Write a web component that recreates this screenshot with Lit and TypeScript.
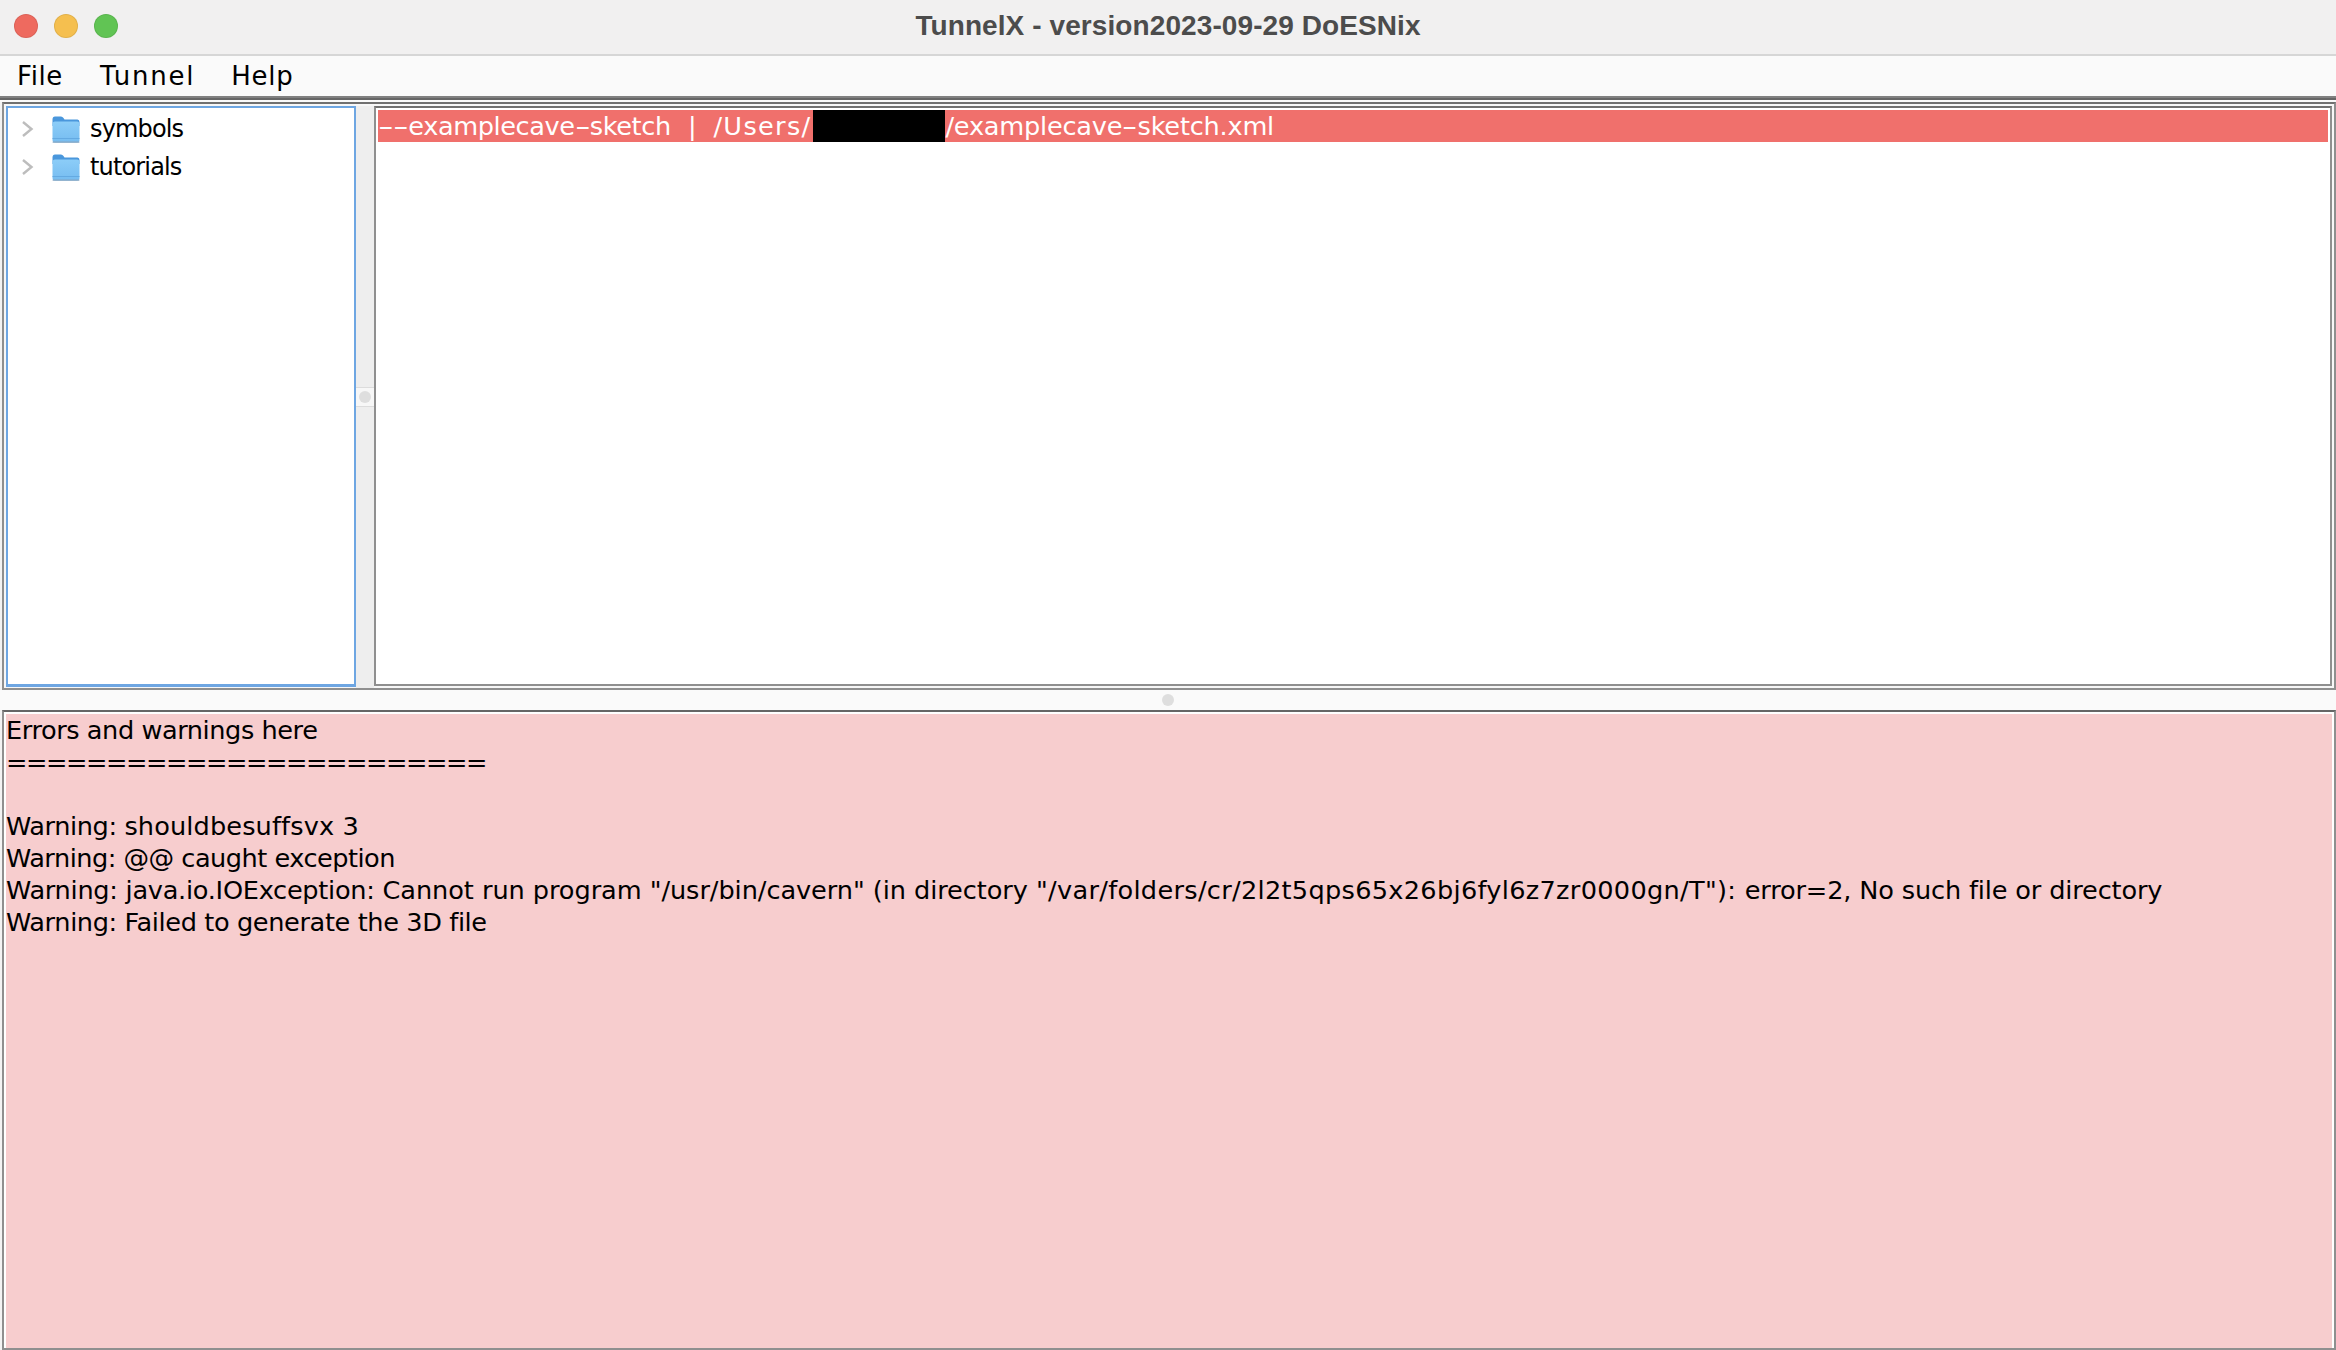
import { LitElement, html, css, svg } from "lit";
import { customElement } from "lit/decorators.js";

const folder = svg`<svg class="folder" viewBox="0 0 28 27" width="28" height="27">
  <defs><linearGradient id="fg" x1="0" y1="0" x2="0" y2="1"><stop offset="0" stop-color="#8ccdf8"/><stop offset="1" stop-color="#76bcf0"/></linearGradient></defs>
  <path d="M0.5 3.5 Q0.5 0.5 3 0.5 H9 Q10.5 0.5 11.5 2 L12.5 3.5 H25.5 Q27.5 3.5 27.5 6 V10 H0.5 Z" fill="#4a97dc"/>
  <rect x="0.5" y="5.5" width="27" height="21" rx="2.5" fill="url(#fg)"/>
  <rect x="0.5" y="22" width="27" height="1" fill="#64aae2"/>
  <rect x="0.5" y="25.5" width="27" height="1.2" rx=".6" fill="#86a6c2"/>
</svg>`;
const chevron = svg`<svg class="chev" viewBox="0 0 12 16" width="12" height="16"><path d="M1 1 L9.5 8 L1 15" fill="none" stroke="#bdbdbd" stroke-width="2.4"/></svg>`;

@customElement("app-root")
export class AppRoot extends LitElement {
  static styles = css`
    :host { display: flex; flex-direction: column; width: 2336px; height: 1350px; overflow: hidden; background: #f3f3f3;
      font-family: "DejaVu Sans", sans-serif; color: #000; }
    .titlebar { height: 54px; flex: none; display: flex; align-items: center; justify-content: center; background: #f1f0f0;
      border-bottom: 2px solid #d6d6d6; position: relative; }
    .lights { position: absolute; left: 14px; top: 14px; display: flex; gap: 16px; }
    .light { width: 24px; height: 24px; border-radius: 50%; box-sizing: border-box; border: 1px solid rgba(0,0,0,.08); }
    .red { background: #ee6a5f; }
    .yellow { background: #f5bf4f; }
    .green { background: #61c454; }
    .title { font: bold 28px "Liberation Sans", sans-serif; color: #4c4c4c; margin-top: -2px; letter-spacing: .09px; }
    .menu { height: 40px; flex: none; display: flex; background: #fafafa; padding-left: 17px; gap: 38px; align-items: center;
      font-size: 26px; }
    .m-file { letter-spacing: .6px; margin-right: -1px; }
    .m-tunnel { letter-spacing: 1.8px; margin-right: -2px; }
    .m-help { letter-spacing: .7px; }
    .rule { flex: none; height: 4px; background: linear-gradient(#808080 0 50%, #666 50%); }
    .gap { flex: none; height: 2px; background: #fafafa; }
    .upper { flex: none; height: 588px; box-sizing: border-box; margin-left: 2px; border: 2px solid #8f8f8f; border-top-color: #707070;
      background: #f7f7f7; display: flex; padding: 2px 2px 0 2px; }
    .tree { width: 350px; height: 581px; box-sizing: border-box; flex: none; background: #fff; border: 2px solid #6ea6e2; border-bottom-width: 3px; padding-top: 2px; }
    .row { height: 38px; display: flex; align-items: center; font-size: 24px; letter-spacing: -.85px; }
    .chev { margin-left: 14px; flex: none; margin-top: -1px; }
    .folder { margin-left: 18px; flex: none; }
    .row span { margin-left: 10px; }
    .vsplit { width: 18px; flex: none; display: flex; align-items: center; background: #eee; }
    .vgrip { width: 18px; height: 20px; background: #f7f7f7; border: solid #dcdcdc; border-width: 1px 0; box-sizing: border-box; display: flex; align-items: center; justify-content: center; }
    .dot { width: 12px; height: 12px; border-radius: 50%; background: #dedede; flex: none; }
    .list { flex: 1; height: 580px; box-sizing: border-box; border: 2px solid #707070; border-color: #707070 #8f8f8f #8f8f8f #8f8f8f; background: #fff; padding: 2px; min-width: 0; }
    .sel { height: 32px; background: #f0706c; color: #fff; font-size: 25.6px; line-height: 32px; white-space: pre; display: flex; word-spacing: 9.5px; }
    .hy { display: inline-block; transform: scaleX(1.7); margin: 0 3.15px; }
    .s1 { letter-spacing: -.4px; }
    .s2 { letter-spacing: -.22px; }
    .u { letter-spacing: 1.3px; }
    .redact { width: 132px; height: 32px; margin-left: 2px; background: #000; flex: none; }
    .hsplit { flex: none; height: 20px; background: #fafafa; display: flex; align-items: center; justify-content: center; }
    .lower { flex: 1; margin-left: 2px; box-sizing: border-box; border: 2px solid #8f8f8f; border-top-color: #666; background: #fff; padding: 2px 2px 0 2px; min-height: 0; display: flex; }
    .log { flex: 1; background: #f7cdce; font-size: 25.6px; line-height: 32px; white-space: pre; overflow: hidden; }
    .line { height: 32px; }
    .eq { letter-spacing: -1.45px; }
    .t1 { letter-spacing: -.43px; }
    .t2 { letter-spacing: -.5px; }
    .t3 { letter-spacing: -.38px; }
    .w { letter-spacing: -.4px; }
    .r { letter-spacing: .12px; }
    .a { letter-spacing: -.27px; }
    .b { letter-spacing: -.06px; }
    .c { letter-spacing: .3px; }
    .d { letter-spacing: -.15px; }
  `;
  render() {
    const log: [string, string][][] = [
      [["Errors and warnings here", "t1"]],
      [["========================", "eq"]],
      [],
      [["Warning: ", "w"], ["shouldbesuffsvx 3", "r"]],
      [["Warning: @@ caught exception", "t2"]],
      [
        ["Warning: java.io.IOException: ", "a"],
        ['Cannot run program "/usr/bin/cavern" (in directory ', "b"],
        ['"/var/folders/cr/2l2t5qps65x26bj6fyl6z7zr0000gn/T"): ', "c"],
        ["error=2, No such file or directory", "d"],
      ],
      [["Warning: Failed to generate the 3D file", "t3"]],
    ];
    return html`
      <div class="titlebar">
        <div class="lights">
          <div class="light red"></div>
          <div class="light yellow"></div>
          <div class="light green"></div>
        </div>
        <div class="title">TunnelX - version2023-09-29 DoESNix</div>
      </div>
      <div class="menu"><span class="m-file">File</span><span class="m-tunnel">Tunnel</span><span class="m-help">Help</span></div>
      <div class="rule"></div>
      <div class="gap"></div>
      <div class="upper">
        <div class="tree">
          <div class="row">${chevron}${folder}<span>symbols</span></div>
          <div class="row">${chevron}${folder}<span>tutorials</span></div>
        </div>
        <div class="vsplit"><div class="vgrip"><div class="dot"></div></div></div>
        <div class="list">
          <div class="sel"><span class="s1"><span class="hy">-</span><span class="hy">-</span>examplecave<span class="hy">-</span>sketch | <span class="u">/Users/</span></span><div class="redact"></div><span class="s2">/examplecave<span class="hy">-</span>sketch.xml</span></div>
        </div>
      </div>
      <div class="hsplit"><div class="dot"></div></div>
      <div class="lower"><div class="log">${log.map((segs) => html`<div class="line">${segs.map(([t, c]) => html`<span class=${c}>${t}</span>`)}</div>`)}</div></div>
    `;
  }
}
